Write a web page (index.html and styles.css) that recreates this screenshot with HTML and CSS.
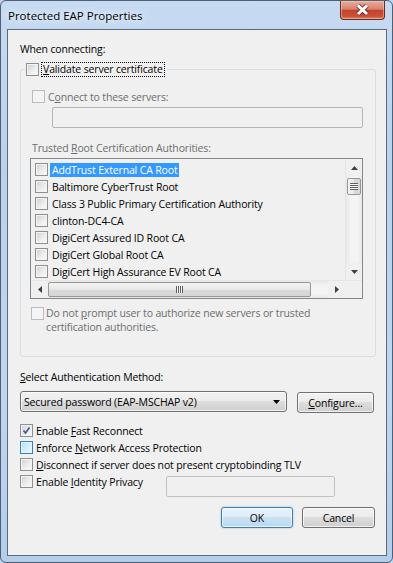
FILE: index.html
```html
<!DOCTYPE html>
<html>
<head>
  <title>Protected EAP Properties</title>
  <link rel="stylesheet" href="styles.css">
</head>
<body>
  <div class="window">
    <div class="titlebar">
      <span class="title">Protected EAP Properties</span>
      <span class="close">
        <svg width="45" height="19" viewBox="0 0 45 19">
          <path d="M18 5.5 L27 14 M27 5.5 L18 14" stroke="#5a2018" stroke-opacity="0.7" stroke-width="5" fill="none"/>
          <path d="M18 5.5 L27 14 M27 5.5 L18 14" stroke="#fff" stroke-width="3" fill="none"/>
        </svg>
      </span>
    </div>

    <div class="client">
      <div class="heading">When connecting:</div>

      <fieldset class="group">
        <legend class="legend">
          <span class="legend-inner">
            <span class="cb"></span>
            <span class="focus"><u>V</u>alidate server certificate</span>
          </span>
        </legend>

        <div class="group-body">
          <div class="opt disabled indent1"><span class="cb dis"></span><span>C<u>o</u>nnect to these servers:</span></div>
          <div class="textbox servers"></div>

          <div class="caption disabled">Trusted <u>R</u>oot Certification Authorities:</div>

          <div class="listbox">
            <div class="list-main">
              <div class="items">
                <div class="item"><span class="cb"></span><span class="item-text sel">AddTrust External CA Root</span></div>
                <div class="item"><span class="cb"></span><span class="item-text">Baltimore CyberTrust Root</span></div>
                <div class="item"><span class="cb"></span><span class="item-text">Class 3 Public Primary Certification Authority</span></div>
                <div class="item"><span class="cb"></span><span class="item-text">clinton-DC4-CA</span></div>
                <div class="item"><span class="cb"></span><span class="item-text">DigiCert Assured ID Root CA</span></div>
                <div class="item"><span class="cb"></span><span class="item-text">DigiCert Global Root CA</span></div>
                <div class="item"><span class="cb"></span><span class="item-text">DigiCert High Assurance EV Root CA</span></div>
              </div>
              <div class="vscroll">
                <div class="sb-btn"><svg width="7" height="4" viewBox="0 0 7 4"><path d="M3.5 0 L7 4 L0 4 Z" fill="#404040"/></svg></div>
                <div class="sb-track">
                  <div class="vthumb"><span class="vgrip"></span></div>
                </div>
                <div class="sb-btn"><svg width="7" height="4" viewBox="0 0 7 4"><path d="M0 0 L7 0 L3.5 4 Z" fill="#404040"/></svg></div>
              </div>
            </div>
            <div class="list-foot">
              <div class="hscroll">
                <div class="sb-btn h"><svg width="4" height="7" viewBox="0 0 4 7"><path d="M0 3.5 L4 0 L4 7 Z" fill="#404040"/></svg></div>
                <div class="sb-track h">
                  <div class="hthumb"><span class="hgrip"></span></div>
                </div>
                <div class="sb-btn h"><svg width="4" height="7" viewBox="0 0 4 7"><path d="M0 0 L4 3.5 L0 7 Z" fill="#404040"/></svg></div>
              </div>
              <div class="corner"></div>
            </div>
          </div>

          <div class="prompt disabled">
            <span class="cb dis"></span>
            <span>Do not <u>p</u>rompt user to authorize new servers or trusted<br>certification authorities.</span>
          </div>
        </div>
      </fieldset>

      <div class="heading method-label"><u>S</u>elect Authentication Method:</div>
      <div class="method-row">
        <div class="combo">
          <span>Secured password (EAP-MSCHAP v2)</span>
          <svg width="7" height="4" viewBox="0 0 7 4"><path d="M0 0 L7 0 L3.5 4 Z" fill="#000"/></svg>
        </div>
        <button class="btn configure"><u>C</u>onfigure...</button>
      </div>

      <div class="checks">
        <div class="check">
          <span class="cb">
            <svg width="11" height="11" viewBox="0 0 11 11"><path d="M2.5 5.5 L4.5 8 L8.5 2.5" stroke="#4a5f97" stroke-width="1.8" fill="none"/></svg>
          </span>
          <span>Enable <u>F</u>ast Reconnect</span>
        </div>
        <div class="check"><span class="cb hot"></span><span>Enforce <u>N</u>etwork Access Protection</span></div>
        <div class="check"><span class="cb"></span><span><u>D</u>isconnect if server does not present cryptobinding TLV</span></div>
        <div class="check identity">
          <span class="identity-label"><span class="cb"></span><span>Enable <u>I</u>dentity Privacy</span></span>
          <div class="textbox identity-box"></div>
        </div>
      </div>

      <div class="actions">
        <button class="btn default">OK</button>
        <button class="btn cancel">Cancel</button>
      </div>
    </div>
  </div>
</body>
</html>
```

FILE: styles.css
```css
* {
  box-sizing: border-box;
}
body {
  margin: 0;
  font-family: "Open Sans", sans-serif;
  font-size: 10.5px;
  letter-spacing: -0.15px;
  color: #000;
  background-color: #bfd5ee;
}
u {
  text-decoration: underline;
  text-underline-offset: 1px;
}

/* window frame */
.window {
  width: 393px;
  height: 563px;
  display: flex;
  flex-direction: column;
  padding: 0 5px 6px 6px;
  border: 1px solid #4f6072;
  border-radius: 6px;
  background: linear-gradient(to bottom, #c6dbf2 0%, #bad1ec 30%, #c0d6ef 70%, #b3cdea 100%);
}
.titlebar {
  height: 28px;
  display: flex;
  justify-content: space-between;
  align-items: flex-start;
}
.title {
  margin: 7px 0 0 1px;
  line-height: 15px;
  font-size: 11.5px;
  letter-spacing: 0;
  text-shadow: 0 0 6px #fff, 0 0 10px rgba(255, 255, 255, 0.8);
}
.close {
  width: 45px;
  height: 19px;
  margin-right: 2px;
  border: 1px solid #6e2a22;
  border-top: none;
  border-radius: 0 0 4px 4px;
  background: linear-gradient(to bottom, #e9ab9c 0%, #d9826f 45%, #c4432e 52%, #c9513a 85%, #dd8a5e 100%);
  box-shadow: inset 0 0 0 1px rgba(255, 220, 210, 0.45);
}
.close svg {
  display: block;
  margin: -1px 0 0 -1px;
}

/* client area */
.client {
  flex: 1;
  border: 1px solid #5c6b7b;
  background-color: #f0f0f0;
  padding: 12px 10px 0 12px;
}
.heading {
  line-height: 15px;
}
.disabled {
  color: #6d6d6d;
}

/* check boxes */
.cb {
  display: inline-block;
  flex: 0 0 13px;
  width: 13px;
  height: 13px;
  border: 1px solid #8e8f8f;
  background: linear-gradient(135deg, #cbced3 0%, #eeeff0 60%, #f8f8f8 100%);
  box-shadow: inset 0 0 0 1px #f4f4f4;
}
.cb svg {
  display: block;
}
.cb.dis {
  border-color: #bcbcbc;
  background: #f4f4f4;
  box-shadow: none;
}
.cb.hot {
  border-color: #3c7fb1;
  background: linear-gradient(135deg, #b2def5 0%, #d7effb 60%, #e9f7fe 100%);
  box-shadow: inset 0 0 0 1px #def9fa;
}

/* group box */
.group {
  margin: 5px 0 0 0;
  padding: 0;
  border: 1px solid #d5dfe5;
  border-radius: 3px;
  min-width: 0;
}
.legend {
  margin-left: 3px;
  padding: 0 2px;
}
.legend-inner {
  display: flex;
  align-items: center;
  height: 15px;
}
.focus {
  margin-left: 2px;
  padding: 0 1px;
  line-height: 13px;
  border: 1px dotted #000;
}
.group-body {
  padding: 0 12px 22px 10px;
}
.opt {
  display: flex;
  align-items: center;
  gap: 3px;
  height: 15px;
  margin-top: 12px;
}
.indent1 {
  margin-left: 1px;
}
.textbox {
  height: 21px;
  border: 1px solid #b5b5b5;
  border-radius: 2px;
  background-color: #f0f0f0;
}
.servers {
  margin: 3px 0 0 21px;
}
.caption {
  margin: 13px 0 0 1px;
  line-height: 15px;
}

/* certificate list */
.listbox {
  margin: 2px 0 0 -1px;
  height: 141px;
  border: 1px solid #828790;
  display: flex;
  flex-direction: column;
  background-color: #f0f0f0;
}
.list-main {
  flex: 1;
  display: flex;
  min-height: 0;
}
.items {
  flex: 1;
  padding-top: 2px;
  overflow: hidden;
  white-space: nowrap;
}
.item {
  height: 17px;
  display: flex;
  align-items: center;
  padding-left: 4px;
}
.item-text {
  margin-left: 2px;
  padding: 0 2px;
  line-height: 14px;
}
.item-text.sel {
  background-color: #3399ff;
  color: #fff;
}
.vscroll {
  width: 17px;
  display: flex;
  flex-direction: column;
  border-left: 1px solid #e6e6e6;
}
.sb-btn {
  flex: 0 0 17px;
  height: 17px;
  display: flex;
  align-items: center;
  justify-content: center;
}
.sb-btn.h {
  width: 17px;
}
.sb-track {
  flex: 1;
  background: linear-gradient(to right, #e8e8e8, #f4f4f4 30%, #f4f4f4 70%, #e8e8e8);
}
.sb-track.h {
  display: flex;
  align-items: center;
  background: linear-gradient(to bottom, #e8e8e8, #f4f4f4 30%, #f4f4f4 70%, #e8e8e8);
}
.vthumb {
  margin: 2px 1px 0 1px;
  height: 17px;
  border: 1px solid #979797;
  border-radius: 2px;
  background: linear-gradient(to right, #f4f4f4 0%, #e8e8e8 50%, #dadada 51%, #d6d6d6 100%);
  display: flex;
  align-items: center;
  justify-content: center;
}
.vgrip {
  width: 8px;
  height: 7px;
  background: repeating-linear-gradient(to bottom, #5f5f5f 0 1px, #f6f6f6 1px 2px);
}
.list-foot {
  flex: 0 0 17px;
  display: flex;
  border-top: 1px solid #e6e6e6;
}
.hscroll {
  flex: 1;
  display: flex;
}
.hthumb {
  width: 263px;
  height: 15px;
  border: 1px solid #979797;
  border-radius: 2px;
  background: linear-gradient(to bottom, #f4f4f4 0%, #e8e8e8 50%, #dadada 51%, #d6d6d6 100%);
  display: flex;
  align-items: center;
  justify-content: center;
}
.hgrip {
  width: 7px;
  height: 7px;
  background: repeating-linear-gradient(to right, #5f5f5f 0 1px, #f6f6f6 1px 2px);
}
.corner {
  width: 17px;
  background-color: #f0f0f0;
}
.prompt {
  display: flex;
  align-items: flex-start;
  gap: 2px;
  margin-top: 7px;
  line-height: 14px;
}
.prompt .cb {
  margin-top: 1px;
}

/* authentication method */
.method-label {
  margin-top: 13px;
}
.method-row {
  display: flex;
  align-items: flex-start;
  margin-top: 6px;
}
.combo {
  width: 267px;
  height: 21px;
  display: flex;
  align-items: center;
  justify-content: space-between;
  padding: 0 6px 0 3px;
  border: 1px solid #707070;
  border-radius: 3px;
  background: linear-gradient(to bottom, #f2f2f2 0%, #ebebeb 49%, #dddddd 50%, #cfcfcf 100%);
  box-shadow: inset 0 0 0 1px rgba(255, 255, 255, 0.7);
}
.btn {
  height: 21px;
  padding: 0;
  font-family: "Open Sans", sans-serif;
  font-size: 10.5px;
  letter-spacing: -0.15px;
  color: #000;
  border: 1px solid #707070;
  border-radius: 3px;
  background: linear-gradient(to bottom, #f2f2f2 0%, #ebebeb 49%, #dddddd 50%, #cfcfcf 100%);
  box-shadow: inset 0 0 0 1px rgba(255, 255, 255, 0.7);
}
.configure {
  width: 77px;
  margin: 1px 0 0 10px;
}

/* options */
.checks {
  margin-top: 9px;
}
.check {
  height: 17px;
  display: flex;
  align-items: center;
  gap: 3px;
}
.check.identity {
  height: 24px;
  align-items: flex-start;
}
.identity-label {
  flex: 0 0 143px;
  height: 17px;
  display: flex;
  align-items: center;
  gap: 3px;
}
.identity-box {
  width: 169px;
  margin-top: 3px;
  border-color: #c2c2c2;
}

/* dialog buttons */
.actions {
  display: flex;
  justify-content: flex-end;
  gap: 9px;
  margin-top: 10px;
  padding-right: 1px;
}
.default {
  width: 72px;
  border-color: #3c7fb1;
  background: linear-gradient(to bottom, #e9f3fb 0%, #dcecf8 49%, #c9e1f3 50%, #bcd8ef 100%);
  box-shadow: inset 0 0 0 1px rgba(255, 255, 255, 0.6), 0 0 2px rgba(60, 127, 177, 0.5);
}
.cancel {
  width: 73px;
}
```
